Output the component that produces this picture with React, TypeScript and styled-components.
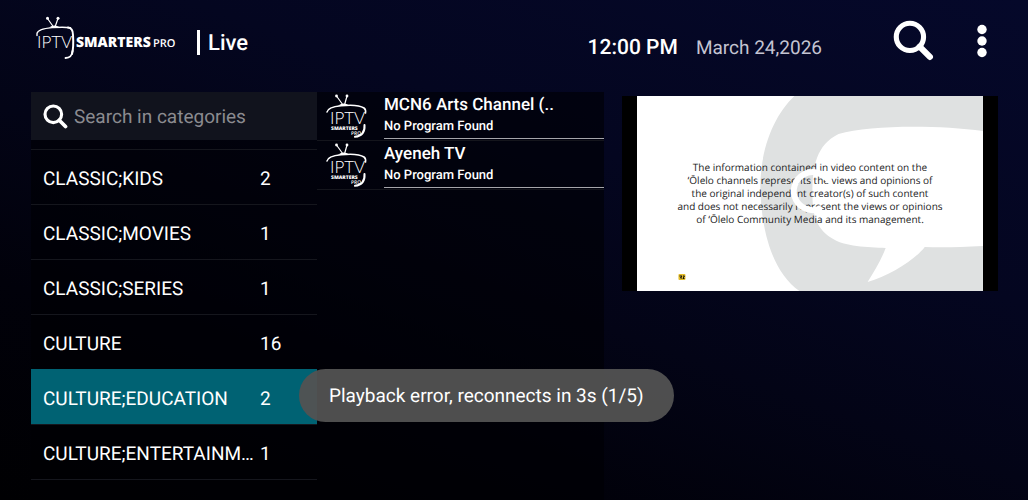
import React from "react";
import styled, { createGlobalStyle } from "styled-components";

const GlobalStyle = createGlobalStyle`
  *, *::before, *::after { box-sizing: border-box; }
  html, body { margin: 0; background: #000003; }
  body { font-family: Roboto, "Liberation Sans", sans-serif; color: #fff; text-rendering: geometricPrecision; }
  button, input { font: inherit; color: inherit; border: 0; background: none; padding: 0; margin: 0; text-rendering: inherit; }
  h1, p, ul { margin: 0; padding: 0; }
  ul { list-style: none; }
`;

const Page = styled.div`
  position: relative;
  height: 100vh;
  overflow: hidden;
  display: flex;
  flex-direction: column;
  padding: 0 30px 0 31px;
  background: linear-gradient(200deg, #05082a 0%, #040620 35%, #030416 55%, #01010a 75%, #000002 100%);
`;

const Header = styled.header`
  flex: none;
  height: 92px;
  display: flex;
  align-items: flex-start;
`;

const Brand = styled.div`
  flex: 1;
  display: flex;
  padding-top: 14px;
`;

const Logo = styled.svg`
  display: block;
  flex: none;
  margin-left: 4px;
`;

const Title = styled.h1`
  margin: 16px 0 0 18px;
  height: 25px;
  padding-left: 8px;
  border-left: 3px solid #fff;
  font-size: 22px;
  line-height: 28px;
  font-weight: 500;
`;

const Clock = styled.div`
  display: flex;
  align-items: baseline;
  gap: 18px;
  margin: 35px 71px 0 0;
  line-height: 26px;
`;

const Time = styled.time<{ $muted?: boolean }>`
  font-size: ${(p) => (p.$muted ? 19 : 21)}px;
  font-weight: ${(p) => (p.$muted ? 400 : 500)};
  color: ${(p) => (p.$muted ? "#c4c4d2" : "#fff")};
`;

const IconButton = styled.button`
  display: block;
  margin-top: 20px;
  & + & { margin: 24px 10px 0 42px; }
  svg { display: block; }
`;

const Main = styled.main`
  flex: 1;
  min-height: 0;
  display: grid;
  grid-template-columns: 286fr 287fr 394fr;
`;

const Panel = styled.section`
  min-width: 0;
  min-height: 0;
  overflow: hidden;
  background: rgba(0, 0, 4, 0.6);
`;

const SearchBox = styled.label`
  display: flex;
  align-items: center;
  gap: 6px;
  height: 48px;
  margin-bottom: 9px;
  padding-left: 12px;
  background: #11131d;
  svg { flex: none; }
`;

const SearchInput = styled.input`
  flex: 1;
  min-width: 0;
  font-size: 19px;
  outline: 0;
  &::placeholder { color: #8b8b90; opacity: 1; }
`;

const Category = styled.button<{ $active?: boolean }>`
  display: flex;
  align-items: center;
  width: 100%;
  height: 55px;
  padding: 2px 12px 0;
  border-top: 1px solid ${(p) => (p.$active ? "#006273" : "#15161d")};
  background: ${(p) => (p.$active ? "#006273" : "transparent")};
  font-size: 19px;
  text-align: left;
`;

const CategoryName = styled.span`
  flex: 1;
  overflow: hidden;
  text-overflow: ellipsis;
  white-space: nowrap;
`;

const Count = styled.span`
  width: 45px;
`;

const Channel = styled.button`
  display: flex;
  width: 100%;
  height: 49px;
  text-align: left;
  border-bottom: 1px solid #14151c;
`;

const Thumb = styled.svg`
  flex: none;
  margin: 1px 16px 0 8px;
`;

const ChannelText = styled.span`
  flex: 1;
  min-width: 0;
  height: 47px;
  border-bottom: 1px solid #a5a5aa;
`;

const ChannelName = styled.span`
  display: block;
  font-size: 17px;
  line-height: 26px;
  font-weight: 500;
`;

const Program = styled.span`
  display: block;
  font-size: 13px;
  line-height: 17px;
  font-weight: 500;
`;

const Player = styled.section`
  align-self: start;
  margin: 4px 0 0 18px;
  height: 195px;
  display: flex;
  justify-content: center;
  background: #000;
`;

const Frame = styled.div`
  position: relative;
  width: 92%;
  height: 100%;
  overflow: hidden;
  background: #fff;
`;

const Artwork = styled.svg`
  position: absolute;
  inset: 0;
  width: 100%;
  height: 100%;
`;

const Disclaimer = styled.p`
  position: relative;
  padding-top: 65px;
  color: #222;
  font-family: "Open Sans", "Noto Sans", sans-serif;
  font-size: 10px;
  line-height: 13px;
  text-align: center;
  white-space: nowrap;
`;

const Toast = styled.div`
  position: absolute;
  left: 299px;
  top: 369px;
  height: 53px;
  padding: 0 30px;
  border-radius: 27px;
  background: rgba(82, 82, 82, 0.95);
  font-size: 19px;
  line-height: 53px;
  white-space: nowrap;
`;

const SearchIcon = ({ size }: { size: number }) => (
  <svg width={size} height={size} viewBox="0 0 40 40" fill="none" stroke="#fff" aria-hidden="true">
    <circle cx="16.5" cy="16.5" r="13.3" strokeWidth="5" />
    <path d="M26 26L36 36" strokeWidth="6" strokeLinecap="round" />
  </svg>
);

const BrandLogo = () => (
  <Logo width="144" height="48" viewBox="0 0 144 48" role="img" aria-label="IPTV Smarters Pro">
    <g fill="none" stroke="#fff" strokeLinecap="round">
      <path d="M12.5 4.5L18.5 13M23 4.500L20 13" strokeWidth="1.2" />
      <path d="M2 21.500V19.500C2.500 16 9 14.300 17 13.600C25 13.200 31 13 35.500 13.800" strokeWidth="1.4" />
      <path d="M33 13.600C37 14 38 17 38 21C38.500 29 38.500 35 37 40" strokeWidth="2" />
      <path d="M37.500 37C37 42 34 44 30.500 44" strokeWidth="1.8" />
    </g>
    <circle cx="12.5" cy="4.3" r="1.5" fill="#fff" />
    <circle cx="23" cy="4.3" r="1.5" fill="#fff" />
    <path d="M14 13.500Q19 9.500 25 13.300Z" fill="#fff" />
    <g fill="#fff">
      <text x="2" y="34" fontFamily="Lato" fontWeight="300" fontSize="17">IPTV</text>
      <text x="41" y="33" fontFamily="Open Sans" fontWeight="800" fontSize="14">SMARTERS</text>
      <text x="118" y="33" fontFamily="Open Sans" fontWeight="600" fontSize="11">PRO</text>
    </g>
  </Logo>
);

const ChannelLogo = () => (
  <Thumb width="43" height="46" viewBox="0 0 43 46" aria-hidden="true">
    <g fill="none" stroke="#fff" strokeLinecap="round">
      <path d="M11.500 3L18 12M22 3L19.500 12" strokeWidth="1.2" />
      <path d="M2 19C2.500 15.500 8 13.500 16 12.700C25 11.800 35 12.300 39 15C41 16.500 41 17.500 40.500 20" strokeWidth="1.6" />
      <path d="M39.500 32C40 39 37 43 30 43.800" strokeWidth="2" />
    </g>
    <circle cx="11.5" cy="3" r="1.4" fill="#fff" />
    <circle cx="22" cy="3" r="1.4" fill="#fff" />
    <path d="M13 12.800Q18.500 8.500 24 12.300Z" fill="#fff" />
    <g fill="#fff">
      <text x="5" y="31" fontFamily="Lato" fontWeight="300" fontSize="17">IPTV</text>
      <text x="6" y="37" fontFamily="Open Sans" fontWeight="800" fontSize="5">SMARTERS</text>
      <text x="26" y="42" fontFamily="Open Sans" fontWeight="600" fontSize="5">PRO</text>
    </g>
  </Thumb>
);

const categories: [string, number | string][] = [
  ["CLASSIC;KIDS", 2],
  ["CLASSIC;MOVIES", 1],
  ["CLASSIC;SERIES", 1],
  ["CULTURE", 16],
  ["CULTURE;EDUCATION", 2],
  ["CULTURE;ENTERTAINMENT", 1],
  ["CULTURE;GENERAL", ""],
];

const channels = ["MCN6 Arts Channel (..", "Ayeneh TV"];

export default function App() {
  return (
    <>
      <GlobalStyle />
      <Page>
        <Header>
          <Brand>
            <BrandLogo />
            <Title>Live</Title>
          </Brand>
          <Clock>
            <Time>12:00 PM</Time>
            <Time $muted>March 24,2026</Time>
          </Clock>
          <IconButton aria-label="Search">
            <SearchIcon size={41} />
          </IconButton>
          <IconButton aria-label="More options">
            <svg width="12" height="34" viewBox="0 0 12 34" fill="#fff" aria-hidden="true">
              <circle cx="6" cy="5.5" r="4.7" />
              <circle cx="6" cy="17" r="4.7" />
              <circle cx="6" cy="28.5" r="4.7" />
            </svg>
          </IconButton>
        </Header>
        <Main>
          <Panel aria-label="Categories">
            <SearchBox>
              <SearchIcon size={25} />
              <SearchInput type="text" placeholder="Search in categories" aria-label="Search in categories" />
            </SearchBox>
            <ul>
              {categories.map(([name, count]) => (
                <li key={name}>
                  <Category $active={name === "CULTURE;EDUCATION"}>
                    <CategoryName>{name}</CategoryName>
                    <Count>{count}</Count>
                  </Category>
                </li>
              ))}
            </ul>
          </Panel>
          <Panel aria-label="Channels">
            <ul>
              {channels.map((name) => (
                <li key={name}>
                  <Channel>
                    <ChannelLogo />
                    <ChannelText>
                      <ChannelName>{name}</ChannelName>
                      <Program>No Program Found</Program>
                    </ChannelText>
                  </Channel>
                </li>
              ))}
            </ul>
          </Panel>
          <Player aria-label="Preview">
            <Frame>
              <Artwork viewBox="0 0 345 195" preserveAspectRatio="none" aria-hidden="true">
                <path
                  d="M157 0C137 19 123 52 123 92C124 137 136 177 162 195H345V150Q310 152 287 151C278 163 252 180 230 186C237 175 244 163 248 152C230 151 207 151 194 142C177 131 175 116 175 97C175 70 179 49 201 38C232 29 300 29 345 35V0Z"
                  fill="#dfe1e1"
                />
              </Artwork>
              <Disclaimer>
                The information contained in video content on the
                <br />
                ʻŌlelo channels represents the views and opinions of
                <br />
                the original independent creator(s) of such content
                <br />
                and does not necessarily represent the views or opinions
                <br />
                of ʻŌlelo Community Media and its management.
              </Disclaimer>
              <Artwork viewBox="0 0 345 195" aria-hidden="true">
                <path d="M192 86A19 19 0 1 0 184 112" fill="none" stroke="#fff" strokeWidth="6" />
                <rect x="41" y="178" width="7" height="6" rx="1" fill="#e5bd29" />
                <path d="M42 180H44.500L43 182H44.500M45.500 180H47L45.500 182.500H47" stroke="#111" fill="none" />
              </Artwork>
            </Frame>
          </Player>
        </Main>
        <Toast role="status">Playback error, reconnects in 3s (1/5)</Toast>
      </Page>
    </>
  );
}
